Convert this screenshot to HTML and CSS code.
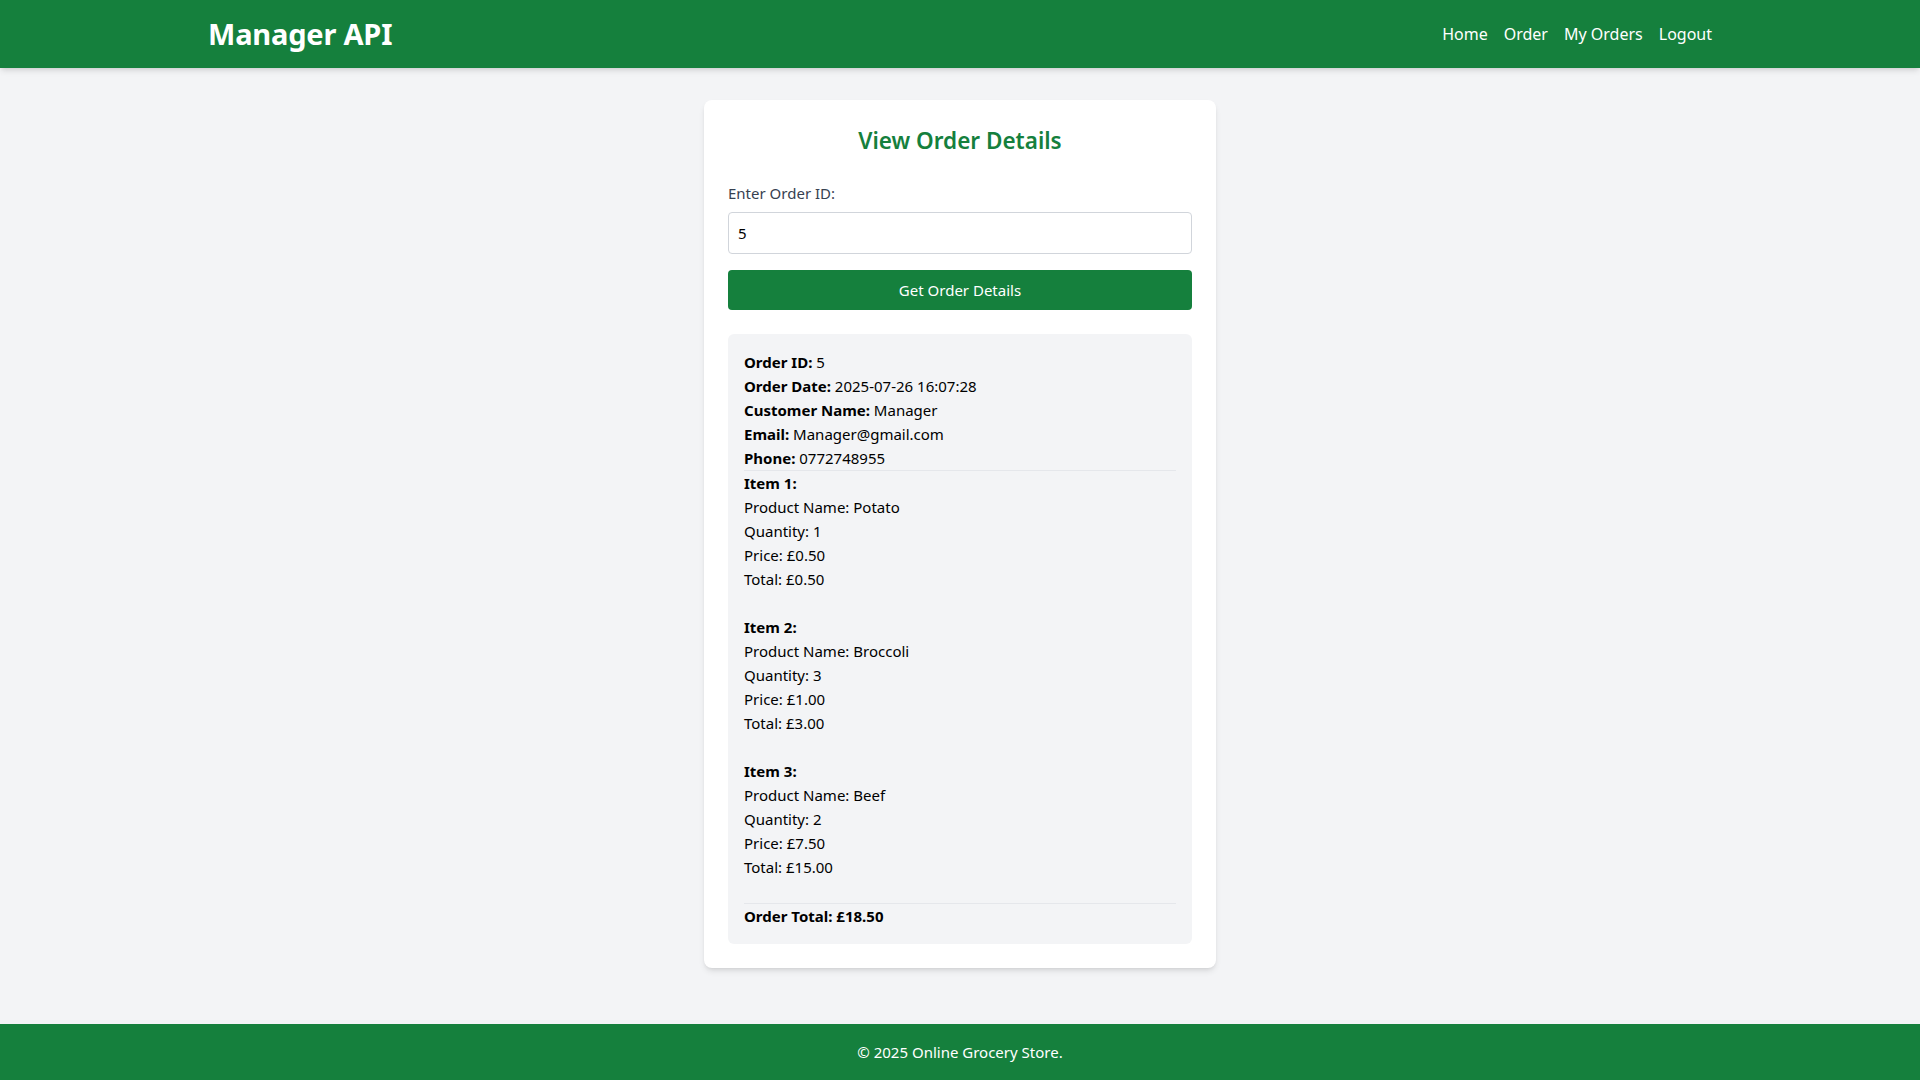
FILE: index.html
```html
<!DOCTYPE html>
<html lang="en">
<head>
<meta charset="utf-8">
<title>Manager API</title>
<link rel="stylesheet" href="styles.css">
</head>
<body>
<div class="page">
  <header class="site-header">
    <div class="container header-inner">
      <h1 class="brand">Manager API</h1>
      <nav class="nav">
        <a href="#">Home</a>
        <a href="#">Order</a>
        <a href="#">My Orders</a>
        <a href="#">Logout</a>
      </nav>
    </div>
  </header>
  <main class="main">
    <div class="card">
      <h2 class="card-title">View Order Details</h2>
      <label class="field-label" for="orderId">Enter Order ID:</label>
      <input class="field-input" id="orderId" type="text" value="5">
      <button class="btn" type="button">Get Order Details</button>
      <div class="result">
        <div class="meta">
          <p><strong>Order ID:</strong> 5</p>
          <p><strong>Order Date:</strong> 2025-07-26 16:07:28</p>
          <p><strong>Customer Name:</strong> Manager</p>
          <p><strong>Email:</strong> Manager@gmail.com</p>
          <p><strong>Phone:</strong> 0772748955</p>
        </div>
        <div class="item">
          <p><strong>Item 1:</strong></p>
          <p>Product Name: Potato</p>
          <p>Quantity: 1</p>
          <p>Price: £0.50</p>
          <p>Total: £0.50</p>
        </div>
        <div class="item">
          <p><strong>Item 2:</strong></p>
          <p>Product Name: Broccoli</p>
          <p>Quantity: 3</p>
          <p>Price: £1.00</p>
          <p>Total: £3.00</p>
        </div>
        <div class="item">
          <p><strong>Item 3:</strong></p>
          <p>Product Name: Beef</p>
          <p>Quantity: 2</p>
          <p>Price: £7.50</p>
          <p>Total: £15.00</p>
        </div>
        <div class="order-total"><strong>Order Total: £18.50</strong></div>
      </div>
    </div>
  </main>
  <footer class="site-footer">
    <p>© 2025 Online Grocery Store.</p>
  </footer>
</div>
</body>
</html>
```

FILE: styles.css
```css
* { box-sizing: border-box; }
html, body { margin: 0; padding: 0; }
body {
  font-family: "Noto Sans", "Open Sans", Arial, sans-serif;
  font-size: 16px;
  line-height: 24px;
  background: #f3f4f6;
  color: #000;
}
.page {
  min-height: 100vh;
  display: flex;
  flex-direction: column;
}
.site-header {
  background: #15803d;
  color: #fff;
  box-shadow: 0 4px 6px -1px rgba(0,0,0,0.1), 0 2px 4px -2px rgba(0,0,0,0.1);
  position: relative;
  z-index: 1;
}
.container {
  max-width: 1536px;
  margin: 0 auto;
  padding: 0 16px;
}
.header-inner {
  display: flex;
  justify-content: space-between;
  align-items: center;
  padding-top: 16px;
  padding-bottom: 16px;
}
.brand {
  margin: 0;
  font-size: 29px;
  line-height: 36px;
  font-weight: 700;
  letter-spacing: -0.2px;
}
.nav {
  display: flex;
  gap: 16px;
  font-size: 16px;
}
.nav a {
  color: #fff;
  text-decoration: none;
}
.main {
  flex: 1;
  padding: 32px 0;
  display: flex;
  justify-content: center;
  align-items: flex-start;
}
.card {
  width: 512px;
  background: #fff;
  border-radius: 8px;
  padding: 24px;
  box-shadow: 0 4px 6px -1px rgba(0,0,0,0.1), 0 2px 4px -2px rgba(0,0,0,0.1);
}
.card-title {
  margin: 0 0 24px;
  text-align: center;
  color: #15803d;
  font-size: 22.5px;
  line-height: 33px;
  font-weight: 600;
}
.field-label {
  display: block;
  color: #374151;
  font-size: 15px;
  margin-bottom: 7px;
}
.field-input {
  display: block;
  width: 100%;
  height: 42px;
  padding: 8px 9px;
  border: 1px solid #d1d5db;
  border-radius: 4px;
  font-family: inherit;
  font-size: 15px;
  color: #000;
  background: #fff;
}
.btn {
  display: block;
  width: 100%;
  margin-top: 16px;
  height: 40px;
  background: #15803d;
  color: #fff;
  border: 0;
  border-radius: 4px;
  font-family: inherit;
  font-size: 15px;
  cursor: pointer;
}
.result {
  margin-top: 24px;
  background: #f3f4f6;
  border-radius: 6px;
  padding: 16px;
  font-size: 15px;
}
.result p { margin: 0; }
.meta {
  border-bottom: 1px solid #e5e7eb;
  padding-bottom: 0;
}
.item {
  margin-bottom: 24px;
}
.order-total {
  border-top: 1px solid #e5e7eb;
}
.site-footer {
  background: #15803d;
  color: #fff;
  text-align: center;
  padding: 16px 0;
  font-size: 15px;
}
.site-footer p { margin: 0; }
```
